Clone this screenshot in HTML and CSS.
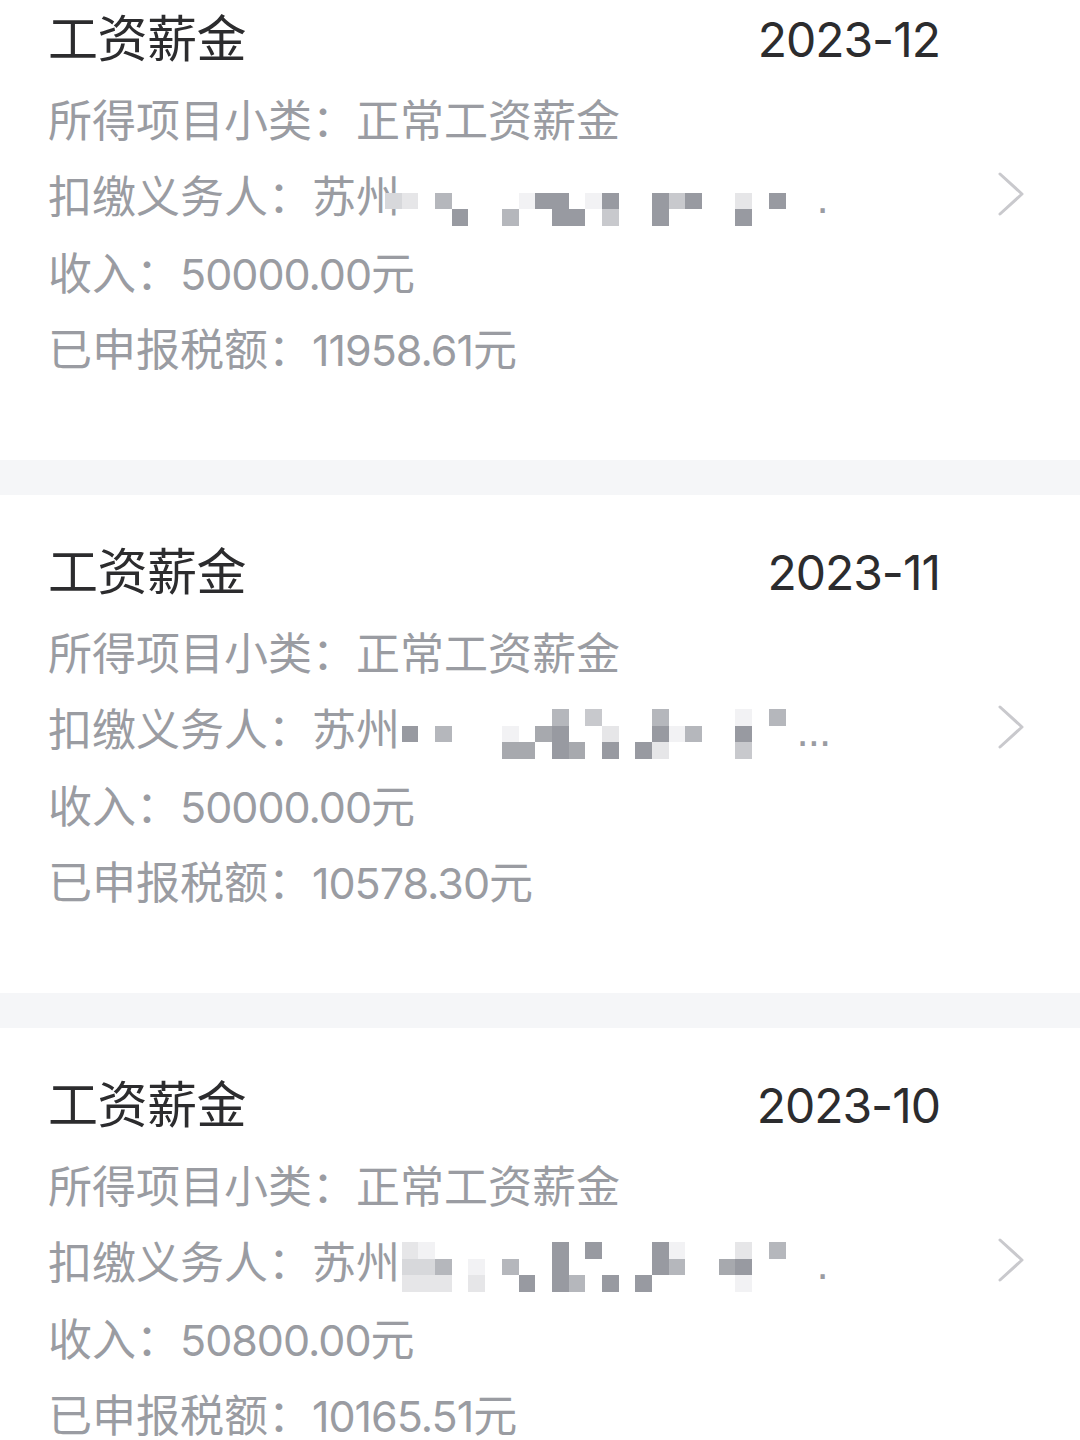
FILE: index.html
```html
<!DOCTYPE html>
<html lang="zh-CN">
<head>
<meta charset="utf-8">
<title>收入纳税明细</title>
<link rel="stylesheet" href="styles.css">
</head>
<body>
<div class="list">
  <section class="card">
    <div class="content">
      <div class="head"><span class="title">工资薪金</span><span class="date">2023-12</span></div>
      <div class="row">所得项目小类：正常工资薪金</div>
      <div class="row payer">扣缴义务人：苏州
        <div class="mask">
          <div class="grid">
            <i></i><i></i><i></i><i></i><i></i><i></i><i></i><i></i><i></i><i></i><i></i><i></i><i></i><i></i><i></i><i></i><i></i><i></i><i></i><i></i><i></i><i></i><i></i><i></i>
            <i class="c3"></i><i class="c2"></i><i></i><i class="c5"></i><i></i><i></i><i></i><i></i><i class="c1"></i><i class="c7"></i><i class="c7"></i><i></i><i class="c1"></i><i class="c7"></i><i></i><i></i><i class="c7"></i><i class="c4"></i><i class="c7"></i><i></i><i></i><i class="c2"></i><i></i><i class="c7"></i>
            <i></i><i></i><i></i><i></i><i class="c7"></i><i></i><i></i><i class="c5"></i><i></i><i></i><i class="c7"></i><i class="c7"></i><i></i><i class="c4"></i><i></i><i></i><i class="c7"></i><i></i><i></i><i></i><i></i><i class="c7"></i><i></i><i></i>
          </div>
          <span class="tail tail-dot">.</span>
        </div>
      </div>
      <div class="row">收入：<span class="num">50000.00</span>元</div>
      <div class="row">已申报税额：<span class="num">11958.61</span>元</div>
    </div>
    <svg class="chev" viewBox="0 0 28 46" aria-hidden="true"><path d="M3 3 L25 23 L3 43"/></svg>
  </section>
  <div class="sep"></div>

  <section class="card">
    <div class="content">
      <div class="head"><span class="title">工资薪金</span><span class="date">2023-11</span></div>
      <div class="row">所得项目小类：正常工资薪金</div>
      <div class="row payer">扣缴义务人：苏州
        <div class="mask">
          <div class="grid">
            <i></i><i></i><i></i><i></i><i></i><i></i><i></i><i></i><i></i><i></i><i class="c5"></i><i></i><i class="c4"></i><i></i><i></i><i></i><i class="c5"></i><i></i><i></i><i></i><i></i><i class="c1"></i><i></i><i class="c5"></i>
            <i></i><i class="c7"></i><i></i><i class="c5"></i><i></i><i></i><i></i><i class="c1"></i><i></i><i class="c6"></i><i class="c7"></i><i></i><i></i><i class="c2"></i><i></i><i></i><i class="c7"></i><i class="c1"></i><i class="c5"></i><i></i><i></i><i class="c7"></i><i></i><i></i>
            <i></i><i></i><i></i><i></i><i></i><i></i><i></i><i class="c6"></i><i class="c6"></i><i></i><i class="c7"></i><i class="c6"></i><i></i><i class="c7"></i><i></i><i class="c7"></i><i class="c2"></i><i></i><i></i><i></i><i></i><i class="c4"></i><i></i><i></i>
          </div>
          <span class="tail tail-dots">...</span>
        </div>
      </div>
      <div class="row">收入：<span class="num">50000.00</span>元</div>
      <div class="row">已申报税额：<span class="num">10578.30</span>元</div>
    </div>
    <svg class="chev" viewBox="0 0 28 46" aria-hidden="true"><path d="M3 3 L25 23 L3 43"/></svg>
  </section>
  <div class="sep"></div>

  <section class="card">
    <div class="content">
      <div class="head"><span class="title">工资薪金</span><span class="date">2023-10</span></div>
      <div class="row">所得项目小类：正常工资薪金</div>
      <div class="row payer">扣缴义务人：苏州
        <div class="mask">
          <div class="grid">
            <i></i><i class="c2"></i><i class="c1"></i><i></i><i></i><i></i><i></i><i></i><i></i><i></i><i class="c7"></i><i></i><i class="c7"></i><i></i><i></i><i></i><i class="c7"></i><i class="c1"></i><i></i><i></i><i></i><i class="c2"></i><i></i><i class="c5"></i>
            <i></i><i class="c3"></i><i class="c3"></i><i class="c5"></i><i></i><i class="c1"></i><i></i><i class="c5"></i><i></i><i></i><i class="c7"></i><i></i><i></i><i></i><i></i><i></i><i class="c7"></i><i class="c5"></i><i></i><i></i><i class="c6"></i><i class="c7"></i><i></i><i></i>
            <i></i><i class="c2"></i><i class="c2"></i><i class="c2"></i><i></i><i class="c2"></i><i></i><i></i><i class="c7"></i><i></i><i class="c7"></i><i class="c5"></i><i></i><i class="c7"></i><i></i><i class="c7"></i><i></i><i></i><i></i><i></i><i></i><i class="c1"></i><i></i><i></i>
          </div>
          <span class="tail tail-dot">.</span>
        </div>
      </div>
      <div class="row">收入：<span class="num">50800.00</span>元</div>
      <div class="row">已申报税额：<span class="num">10165.51</span>元</div>
    </div>
    <svg class="chev" viewBox="0 0 28 46" aria-hidden="true"><path d="M3 3 L25 23 L3 43"/></svg>
  </section>
  <div class="sep"></div>
</div>
</body>
</html>
```

FILE: styles.css
```css
* {
  box-sizing: border-box;
}

html, body {
  margin: 0;
  padding: 0;
  background: #ffffff;
}

body {
  font-family: "Liberation Sans", "Noto Sans CJK SC", sans-serif;
  width: 1080px;
  height: 1440px;
  overflow: hidden;
}

.list {
  margin-top: -38px;
  display: flex;
  flex-direction: column;
}

.card {
  display: flex;
  align-items: center;
  height: 498px;
  padding: 48px 55px 72px 48px;
  background: #ffffff;
}

.content {
  flex: 1;
  display: flex;
  flex-direction: column;
  margin-right: 57px;
}

.head {
  display: flex;
  justify-content: space-between;
  align-items: center;
  height: 60px;
  margin-bottom: 14px;
  color: #2c2c2e;
}

.title {
  font-size: 50px;
  line-height: 60px;
  letter-spacing: -0.5px;
}

.date {
  font-family: "Inter", "Liberation Sans", sans-serif;
  font-size: 48px;
  line-height: 60px;
  letter-spacing: -1px;
}

.row {
  font-size: 44px;
  line-height: 76px;
  height: 76px;
  color: #9a9ca2;
  white-space: nowrap;
}

.num {
  font-family: "Inter", "Liberation Sans", sans-serif;
  font-size: 43px;
  letter-spacing: -1px;
}

.payer {
  position: relative;
}

.mask {
  position: absolute;
  top: 0;
  left: 337px;
  height: 76px;
  display: flex;
  align-items: flex-start;
}

.grid {
  margin-top: 16px;
  display: grid;
  grid-template-columns: repeat(24, 16.7px);
  grid-template-rows: repeat(3, 16.7px);
}

.grid i {
  display: block;
  background: transparent;
}

.grid .c1 { background: #f2f2f4; }
.grid .c2 { background: #e6e6e8; }
.grid .c3 { background: #d7d8db; }
.grid .c4 { background: #c8c9cd; }
.grid .c5 { background: #b5b7bc; }
.grid .c6 { background: #a7a9ae; }
.grid .c7 { background: #989aa1; }

.tail {
  font-size: 44px;
  line-height: 76px;
  color: #9a9ca2;
}

.tail-dots {
  margin-left: 11px;
  letter-spacing: -1px;
}

.tail-dot {
  margin-left: 31px;
}

.chev {
  width: 28px;
  height: 46px;
  margin-bottom: 10px;
  flex: none;
}

.chev path {
  fill: none;
  stroke: #c9c9cd;
  stroke-width: 3;
  stroke-linecap: round;
  stroke-linejoin: round;
}

.sep {
  height: 35px;
  background: #f5f6f8;
  flex: none;
}
```
